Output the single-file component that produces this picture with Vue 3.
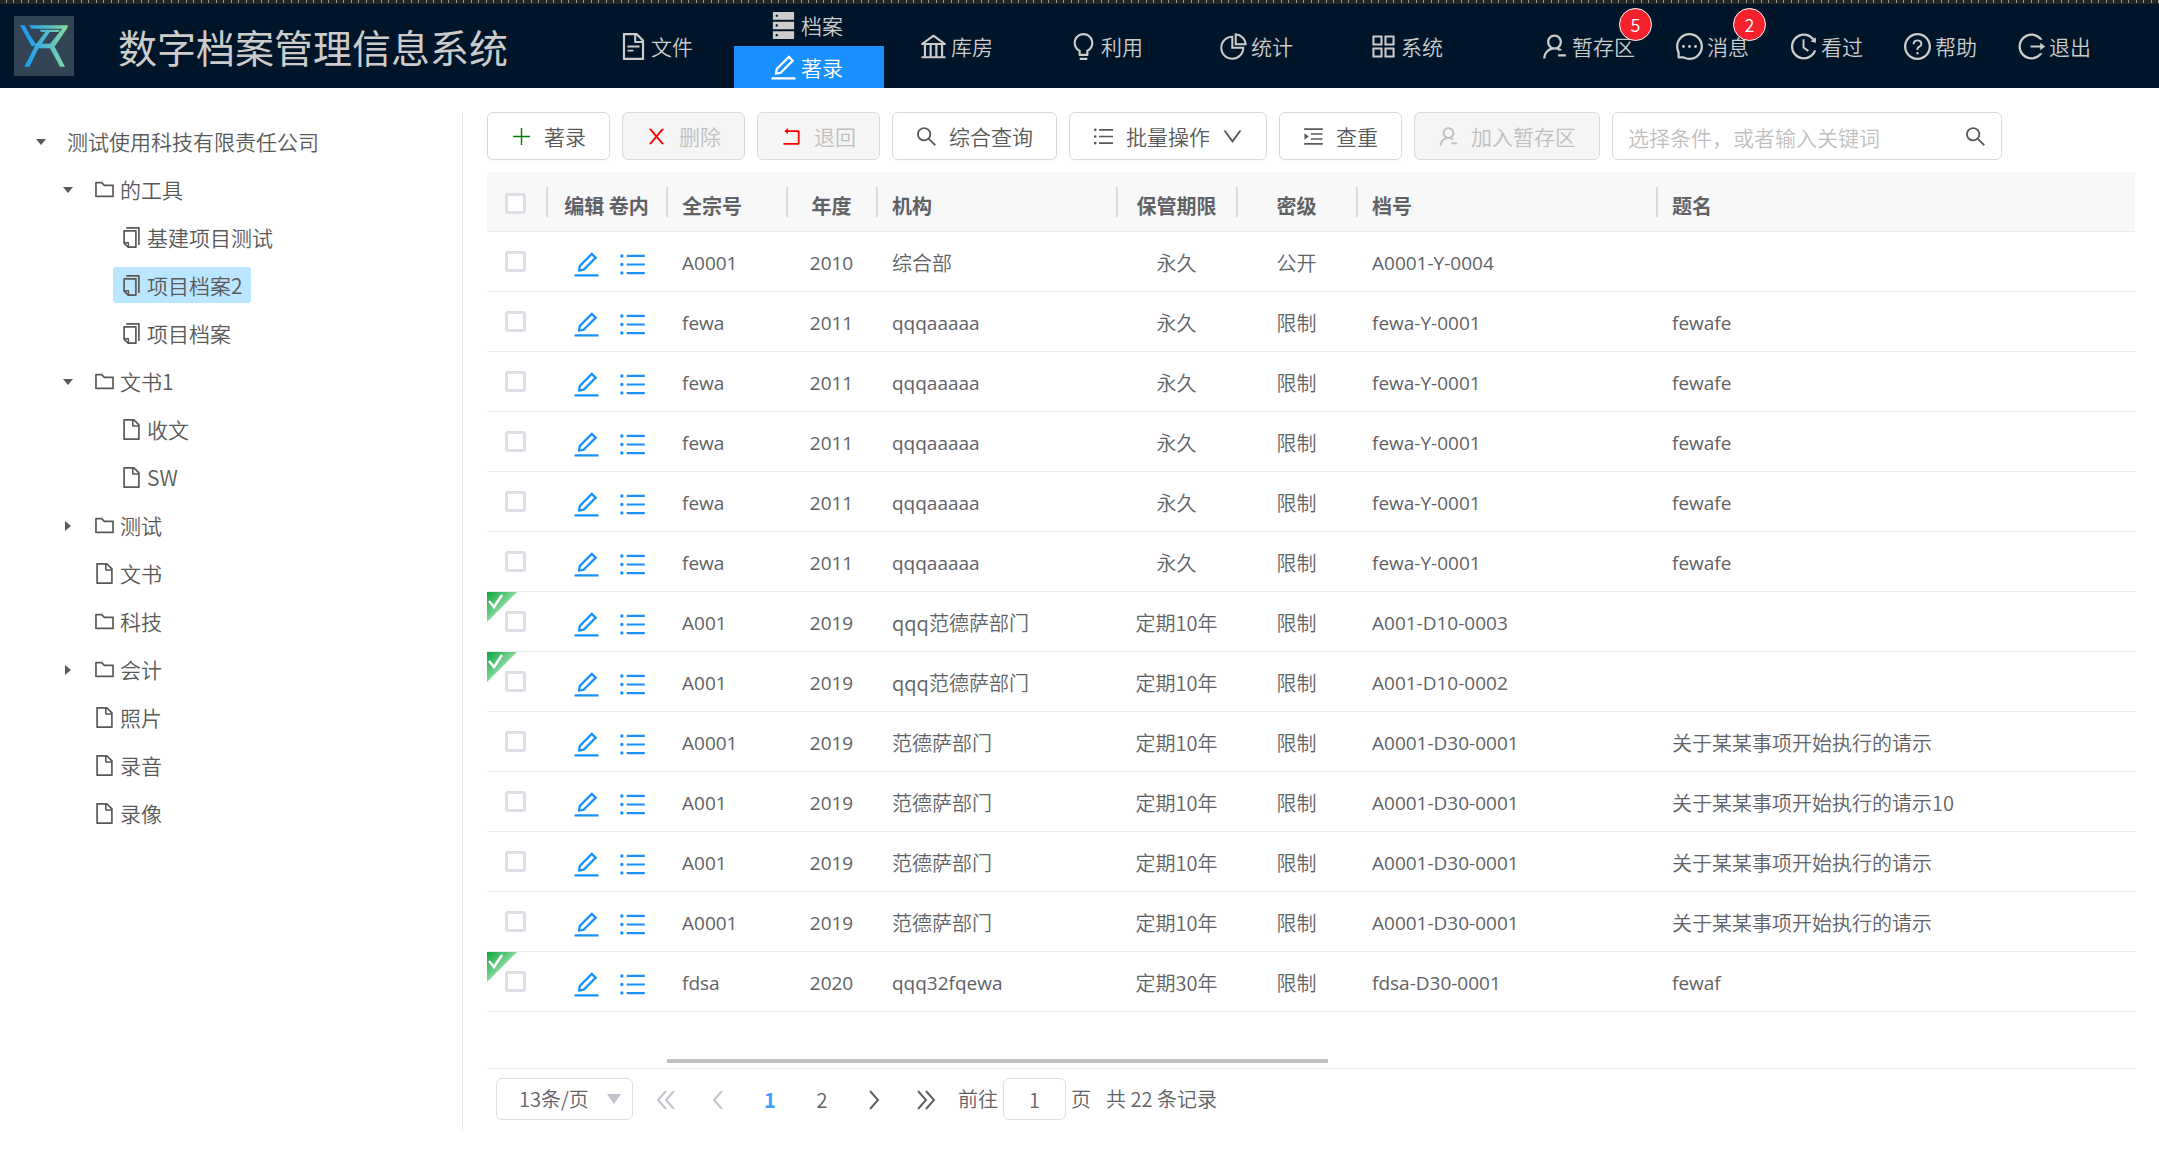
<script setup>
import { ref, h } from 'vue'

const filePath = 'M854.6 288.6L639.4 73.4c-6-6-14.1-9.4-22.6-9.4H192c-17.7 0-32 14.3-32 32v832c0 17.7 14.3 32 32 32h640c17.7 0 32-14.3 32-32V311.3c0-8.5-3.4-16.7-9.4-22.7zM790.2 326H602V137.8L790.2 326zm1.8 562H232V136h302v216a42 42 0 0 0 42 42h216v494z'

const paths = {
  file: filePath,
  fileText: filePath + 'M504 618H320c-4.4 0-8 3.6-8 8v48c0 4.4 3.6 8 8 8h184c4.4 0 8-3.6 8-8v-48c0-4.4-3.6-8-8-8zM312 490v48c0 4.4 3.6 8 8 8h384c4.4 0 8-3.6 8-8v-48c0-4.4-3.6-8-8-8H320c-4.4 0-8 3.6-8 8z',
  database: 'M832 64H192c-17.7 0-32 14.3-32 32v224h704V96c0-17.7-14.3-32-32-32zM288 232c-22.1 0-40-17.9-40-40s17.9-40 40-40 40 17.9 40 40-17.9 40-40 40zM160 928c0 17.7 14.3 32 32 32h640c17.7 0 32-14.3 32-32V704H160v224zm128-136c22.1 0 40 17.9 40 40s-17.9 40-40 40-40-17.9-40-40 17.9-40 40-40zM160 640h704V384H160v256zm128-168c22.1 0 40 17.9 40 40s-17.9 40-40 40-40-17.9-40-40 17.9-40 40-40z',
  edit: 'M257.7 752c2 0 4-.2 6-.5L431.9 722c2-.4 3.9-1.3 5.3-2.8l423.9-423.9a9.96 9.96 0 0 0 0-14.1L694.9 114.9c-1.9-1.9-4.4-2.9-7.1-2.9s-5.2 1-7.1 2.9L256.8 538.8c-1.5 1.5-2.4 3.3-2.8 5.3l-29.5 168.2a33.5 33.5 0 0 0 9.4 29.8c6.6 6.4 14.9 9.9 23.8 9.9zm67.4-174.4L687.8 215l73.3 73.3-362.7 362.6-88.9 15.7 15.6-89zM880 836H144c-17.7 0-32 14.3-32 32v36c0 4.4 3.6 8 8 8h784c4.4 0 8-3.6 8-8v-36c0-17.7-14.3-32-32-32z',
  bank: 'M894 462c30.9 0 43.8-39.7 18.7-58L530.8 126.2a31.81 31.81 0 0 0-37.6 0L111.3 404c-25.1 18.2-12.2 58 18.8 58H192v374h-72c-4.4 0-8 3.6-8 8v52c0 4.4 3.6 8 8 8h784c4.4 0 8-3.6 8-8v-52c0-4.4-3.6-8-8-8h-72V462h62zM512 196.7l271.1 197.2H240.9L512 196.7zM264 462h117v374H264V462zm189 0h117v374H453V462zm307 374H642V462h118v374z',
  bulb: 'M632 888H392c-4.4 0-8 3.6-8 8v32c0 17.7 14.3 32 32 32h192c17.7 0 32-14.3 32-32v-32c0-4.4-3.6-8-8-8zM512 64c-181.1 0-328 146.9-328 328 0 121.4 66 227.4 164 284.1V792c0 17.7 14.3 32 32 32h264c17.7 0 32-14.3 32-32V676.1c98-56.7 164-162.7 164-284.1 0-181.1-146.9-328-328-328zm127.9 549.8L604 634.6V752H420V634.6l-35.9-20.8C305.4 568.3 256 484.5 256 392c0-141.4 114.6-256 256-256s256 114.6 256 256c0 92.5-49.4 176.3-128.1 221.8z',
  pie: 'M864 518H506V160c0-4.4-3.6-8-8-8h-26a398.46 398.46 0 0 0-282.8 117.1 398.19 398.19 0 0 0-85.7 127.1A397.61 397.61 0 0 0 72 552a398.46 398.46 0 0 0 117.1 282.8c36.7 36.7 79.5 65.6 127.1 85.7A397.61 397.61 0 0 0 472 952a398.46 398.46 0 0 0 282.8-117.1c36.7-36.7 65.6-79.5 85.7-127.1A397.61 397.61 0 0 0 872 552v-26c0-4.4-3.6-8-8-8zM705.7 787.8A331.59 331.59 0 0 1 470.4 884c-88.1-.4-170.9-34.9-233.2-97.2C174.5 724.1 140 640.7 140 552c0-88.7 34.5-172.1 97.2-234.8 54.6-54.6 124.9-87.9 200.8-95.5V586h364.3c-7.7 76.3-41.3 147-96.6 201.8zM952 462.4l-2.6-28.2c-8.5-92.1-49.4-179-115.2-244.6A399.4 399.4 0 0 0 589 74.6L560.7 72c-4.7-.4-8.7 3.2-8.7 7.9V464c0 4.4 3.6 8 8 8l384-1c4.7 0 8.4-4 8-8.6zm-332.2-58.2V147.6a332.24 332.24 0 0 1 166.4 89.8c45.7 45.6 77 103.6 90 166.1l-256.4.7z',
  appstore: 'M464 144H160c-8.8 0-16 7.2-16 16v304c0 8.8 7.2 16 16 16h304c8.8 0 16-7.2 16-16V160c0-8.8-7.2-16-16-16zm-52 268H212V212h200v200zm452-268H560c-8.8 0-16 7.2-16 16v304c0 8.8 7.2 16 16 16h304c8.8 0 16-7.2 16-16V160c0-8.8-7.2-16-16-16zm-52 268H612V212h200v200zM464 544H160c-8.8 0-16 7.2-16 16v304c0 8.8 7.2 16 16 16h304c8.8 0 16-7.2 16-16V560c0-8.8-7.2-16-16-16zm-52 268H212V612h200v200zm452-268H560c-8.8 0-16 7.2-16 16v304c0 8.8 7.2 16 16 16h304c8.8 0 16-7.2 16-16V560c0-8.8-7.2-16-16-16zm-52 268H612V612h200v200z',
  user: 'M678.3 655.4c24.2-13 51.9-20.4 81.4-20.4h.1c3 0 4.4-3.6 2.2-5.6a371.67 371.67 0 0 0-103.7-65.8c-.4-.2-.8-.3-1.2-.5C719.2 518 759.6 444.7 759.6 362c0-137-110.8-248-247.5-248S264.7 225 264.7 362c0 82.7 40.4 156 102.6 201.1-.4.2-.8.3-1.2.5-44.7 18.9-84.8 46-119.3 80.6a373.42 373.42 0 0 0-80.4 119.5A373.6 373.6 0 0 0 137 901.8a8 8 0 0 0 8 8.2h59.9c4.3 0 7.9-3.5 8-7.8 2-77.2 32.9-149.5 87.6-204.3C357 641.2 432.2 610 512.2 610c56.7 0 111.1 15.7 158 45.1a8.1 8.1 0 0 0 8.1.3zM512.2 534c-45.8 0-88.9-17.9-121.4-50.4A171.2 171.2 0 0 1 340.5 362c0-45.9 17.9-89.1 50.3-121.6S466.3 190 512.2 190s88.9 17.9 121.4 50.4A171.2 171.2 0 0 1 683.9 362c0 45.9-17.9 89.1-50.3 121.6C601.1 516.1 558 534 512.2 534zM880 772H640c-4.4 0-8 3.6-8 8v56c0 4.4 3.6 8 8 8h240c4.4 0 8-3.6 8-8v-56c0-4.4-3.6-8-8-8z',
  message: 'M464 512a48 48 0 1 0 96 0 48 48 0 1 0-96 0zm200 0a48 48 0 1 0 96 0 48 48 0 1 0-96 0zm-400 0a48 48 0 1 0 96 0 48 48 0 1 0-96 0zm661.2-173.6c-22.6-53.7-55-101.9-96.3-143.3a444.35 444.35 0 0 0-143.3-96.3C630.6 75.7 572.2 64 512 64h-2c-60.6.3-119.3 12.3-174.5 35.9a445.35 445.35 0 0 0-142 96.5c-40.9 41.3-73 89.3-95.2 142.8-23 55.4-34.6 114.3-34.3 174.9A449.4 449.4 0 0 0 112 714v152a46 46 0 0 0 46 46h152.1A449.4 449.4 0 0 0 510 960h2.1c59.9 0 118-11.6 172.7-34.3a444.48 444.48 0 0 0 142.8-95.2c41.3-40.9 73.8-88.7 96.5-142 23.6-55.2 35.6-113.9 35.9-174.5.3-60.9-11.5-120-34.8-175.6zm-151.1 438C704 845.8 611 884 512 884h-1.7c-60.3-.3-120.2-15.3-173.1-43.5l-8.4-4.5H188V695.2l-4.5-8.4C155.3 633.9 140.3 574 140 513.7c-.4-99.7 37.7-193.3 107.6-263.8 69.8-70.5 163.1-109.5 262.8-109.9h1.7c50 0 98.5 9.7 144.2 28.9 44.6 18.7 84.6 45.6 119 80 34.3 34.3 61.3 74.4 80 119 19.4 46.2 29.1 95.2 28.9 145.8-.6 99.6-39.7 192.9-110.1 262.7z',
  history: 'M536.1 273H488c-4.4 0-8 3.6-8 8v275.3c0 2.6 1.2 5 3.3 6.5l165.3 120.7c3.6 2.6 8.6 1.9 11.2-1.7l28.6-39c2.7-3.7 1.9-8.7-1.7-11.2L544.1 528.5V281c0-4.4-3.6-8-8-8zm219.8 75.2l156.8 38.3c5 1.2 9.9-2.6 9.9-7.7l.8-161.5c0-6.7-7.7-10.5-12.9-6.3L752.9 334.1a8 8 0 0 0 3 14.1zm167.7 301.1l-56.7-19.5a8 8 0 0 0-10.1 4.8c-1.9 5.1-3.9 10.1-6 15.1-17.8 42.1-43.3 80-75.9 112.5a353 353 0 0 1-112.5 75.9 352.18 352.18 0 0 1-137.7 27.8c-47.8 0-94.1-9.3-137.7-27.8a353 353 0 0 1-112.5-75.9c-32.5-32.5-58-70.4-75.9-112.5A353.44 353.44 0 0 1 171 512c0-47.8 9.3-94.2 27.8-137.8 17.8-42.1 43.3-80 75.9-112.5a353 353 0 0 1 112.5-75.9C430.6 167.3 477 158 524.8 158s94.1 9.3 137.7 27.8A353 353 0 0 1 775 261.7c10.2 10.3 19.8 21 28.6 32.3l59.8-46.8C784.7 146.6 662.2 81.9 524.6 82 285 82.1 92.6 276.7 95 516.4 97.4 751.9 288.9 942 524.8 942c185.5 0 343.5-117.6 403.7-282.3 1.5-4.2-.7-8.9-4.9-10.4z',
  help: 'M512 64C264.6 64 64 264.6 64 512s200.6 448 448 448 448-200.6 448-448S759.4 64 512 64zm0 820c-205.4 0-372-166.6-372-372s166.6-372 372-372 372 166.6 372 372-166.6 372-372 372zM623.6 316.7C593.6 290.4 554 276 512 276s-81.6 14.5-111.6 40.7C369.2 344 352 380.7 352 420v7.6c0 4.4 3.6 8 8 8h48c4.4 0 8-3.6 8-8V420c0-44.1 43.1-80 96-80s96 35.9 96 80c0 31.1-22 59.6-56.1 72.7-21.2 8.1-39.2 22.3-52.1 40.9-13.1 19-19.9 41.8-19.9 64.9V620c0 4.4 3.6 8 8 8h48c4.4 0 8-3.6 8-8v-22.7a48.3 48.3 0 0 1 30.9-44.8c59-22.7 97.1-74.7 97.1-132.5.1-39.3-17.1-76-48.3-103.3zM472 732a40 40 0 1 0 80 0 40 40 0 1 0-80 0z',
  logout: 'M868 732h-70.3c-4.8 0-9.3 2.1-12.3 5.8-7 8.5-14.5 16.7-22.4 24.5a353.84 353.84 0 0 1-112.7 75.9A352.8 352.8 0 0 1 512.4 866c-47.9 0-94.3-9.4-137.9-27.8a353.84 353.84 0 0 1-112.7-75.9 353.28 353.28 0 0 1-76-112.5C167.3 606.2 158 559.9 158 512s9.4-94.2 27.8-137.8c17.8-42.1 43.4-80 76-112.5s70.5-58.1 112.7-75.9c43.6-18.4 90-27.8 137.9-27.8 47.9 0 94.3 9.3 137.9 27.8 42.2 17.8 80.1 43.4 112.7 75.9 7.9 7.9 15.3 16.1 22.4 24.5 3 3.7 7.6 5.8 12.3 5.8H868c6.3 0 10.2-7 6.7-12.3C798 160.5 663.8 81.6 511.3 82 271.7 82.6 79.6 277.1 82 516.4 84.4 751.9 276.2 942 512.4 942c152.1 0 285.7-78.8 362.3-197.7 3.4-5.3-.4-12.3-6.7-12.3zm88.9-226.3L815 393.7c-5.3-4.2-13-.4-13 6.3v76H488c-4.4 0-8 3.6-8 8v56c0 4.4 3.6 8 8 8h314v76c0 6.7 7.8 10.5 13 6.3l141.9-112a8 8 0 0 0 0-12.6z',
  folder: 'M880 298.4H521L403.7 186.2a8.15 8.15 0 0 0-5.5-2.2H144c-17.7 0-32 14.3-32 32v592c0 17.7 14.3 32 32 32h736c17.7 0 32-14.3 32-32V330.4c0-17.7-14.3-32-32-32zM840 768H184V256h188.5l119.6 114.4H840V768z',
  copy: 'M832 64H296c-4.4 0-8 3.6-8 8v56c0 4.4 3.6 8 8 8h496v688c0 4.4 3.6 8 8 8h56c4.4 0 8-3.6 8-8V96c0-17.7-14.3-32-32-32zM704 192H192c-17.7 0-32 14.3-32 32v530.7c0 8.5 3.4 16.6 9.4 22.6l173.3 173.3c2.2 2.2 4.7 4 7.4 5.5v1.9h4.2c3.5 1.3 7.2 2 11 2H704c17.7 0 32-14.3 32-32V224c0-17.7-14.3-32-32-32zM350 856.2L263.9 770H350v86.2zM664 888H414V746c0-22.1-17.9-40-40-40H232V264h432v624z',
  plus: 'M482 152h60v720h-60zM152 482h720v60H152z',
  close: 'M563.8 512l262.5-312.9c4.4-5.2.7-13.1-6.1-13.1h-79.8c-4.7 0-9.2 2.1-12.3 5.7L511.6 449.8 295.1 191.7c-3-3.6-7.5-5.7-12.3-5.7H203c-6.8 0-10.5 7.9-6.1 13.1L459.4 512 196.9 824.9A7.95 7.95 0 0 0 203 838h79.8c4.7 0 9.2-2.1 12.3-5.7l216.5-258.1 216.5 258.1c3 3.6 7.5 5.7 12.3 5.7h79.8c6.8 0 10.5-7.9 6.1-13.1L563.8 512z',
  rollback: 'M793 242H366v-74c0-6.7-7.7-10.4-12.9-6.3l-142 112a8 8 0 0 0 0 12.6l142 112c5.2 4.1 12.9.4 12.9-6.3v-74h415v470H175c-4.4 0-8 3.6-8 8v60c0 4.4 3.6 8 8 8h618c35.3 0 64-28.7 64-64V306c0-35.3-28.7-64-64-64z',
  search: 'M909.6 854.5L649.9 594.8C690.2 542.7 712 479 712 412c0-80.2-31.3-155.4-87.9-212.1-56.6-56.7-132-87.9-212.1-87.9s-155.5 31.3-212.1 87.9C143.2 256.5 112 331.8 112 412c0 80.1 31.3 155.5 87.9 212.1C256.5 680.8 331.8 712 412 712c67 0 130.6-21.8 182.7-62l259.7 259.6a8.2 8.2 0 0 0 11.6 0l43.6-43.5a8.2 8.2 0 0 0 0-11.6zM570.4 570.4C528 612.7 471.8 636 412 636s-116-23.3-158.4-65.6C211.3 528 188 471.8 188 412s23.3-116.1 65.6-158.4C296 211.3 352.2 188 412 188s116.1 23.2 158.4 65.6S636 352.2 636 412s-23.3 116.1-65.6 158.4z',
  list: 'M912 192H328c-4.4 0-8 3.6-8 8v56c0 4.4 3.6 8 8 8h584c4.4 0 8-3.6 8-8v-56c0-4.4-3.6-8-8-8zm0 284H328c-4.4 0-8 3.6-8 8v56c0 4.4 3.6 8 8 8h584c4.4 0 8-3.6 8-8v-56c0-4.4-3.6-8-8-8zm0 284H328c-4.4 0-8 3.6-8 8v56c0 4.4 3.6 8 8 8h584c4.4 0 8-3.6 8-8v-56c0-4.4-3.6-8-8-8zM104 228a56 56 0 1 0 112 0 56 56 0 1 0-112 0zm0 284a56 56 0 1 0 112 0 56 56 0 1 0-112 0zm0 284a56 56 0 1 0 112 0 56 56 0 1 0-112 0z',
  unfold: 'M408 442h480c4.4 0 8-3.6 8-8v-56c0-4.4-3.6-8-8-8H408c-4.4 0-8 3.6-8 8v56c0 4.4 3.6 8 8 8zm-8 204c0 4.4 3.6 8 8 8h480c4.4 0 8-3.6 8-8v-56c0-4.4-3.6-8-8-8H408c-4.4 0-8 3.6-8 8v56zm504-486H120c-4.4 0-8 3.6-8 8v56c0 4.4 3.6 8 8 8h784c4.4 0 8-3.6 8-8v-56c0-4.4-3.6-8-8-8zm0 632H120c-4.4 0-8 3.6-8 8v56c0 4.4 3.6 8 8 8h784c4.4 0 8-3.6 8-8v-56c0-4.4-3.6-8-8-8zM142.4 642.1L298.7 519a8.84 8.84 0 0 0 0-13.9L142.4 381.9c-5.8-4.6-14.4-.5-14.4 6.9v246.3a8.9 8.9 0 0 0 14.4 7z',
  down: 'M884 256h-75c-5.1 0-9.9 2.5-12.9 6.6L512 654.2 227.9 262.6c-3-4.1-7.8-6.6-12.9-6.6h-75c-6.5 0-10.3 7.4-6.5 12.7l352.6 486.1c12.8 17.6 39 17.6 51.7 0l352.6-486.1c3.9-5.3.1-12.7-6.4-12.7z'
}

const Icon = (props) =>
  h('svg', { viewBox: '64 64 896 896', fill: 'currentColor', 'aria-hidden': 'true' }, [h('path', { d: paths[props.name] })])
Icon.props = ['name']

const navBefore = [{ icon: 'fileText', text: '文件' }]
const navAfter = [
  { icon: 'bank', text: '库房' },
  { icon: 'bulb', text: '利用' },
  { icon: 'pie', text: '统计' },
  { icon: 'appstore', text: '系统' }
]
const userNav = [
  { icon: 'user', text: '暂存区', badge: 5 },
  { icon: 'message', text: '消息', badge: 2 },
  { icon: 'history', text: '看过' },
  { icon: 'help', text: '帮助' },
  { icon: 'logout', text: '退出' }
]

const tree = [
  { level: 0, caret: 'open', text: '测试使用科技有限责任公司' },
  { level: 1, caret: 'open', icon: 'folder', text: '的工具' },
  { level: 2, icon: 'copy', text: '基建项目测试' },
  { level: 2, icon: 'copy', text: '项目档案2', selected: true },
  { level: 2, icon: 'copy', text: '项目档案' },
  { level: 1, caret: 'open', icon: 'folder', text: '文书1' },
  { level: 2, icon: 'file', text: '收文' },
  { level: 2, icon: 'file', text: 'SW' },
  { level: 1, caret: 'closed', icon: 'folder', text: '测试' },
  { level: 1, icon: 'file', text: '文书' },
  { level: 1, icon: 'folder', text: '科技' },
  { level: 1, caret: 'closed', icon: 'folder', text: '会计' },
  { level: 1, icon: 'file', text: '照片' },
  { level: 1, icon: 'file', text: '录音' },
  { level: 1, icon: 'file', text: '录像' }
]

const tools = [
  { icon: 'plus', text: '著录', tone: 'green' },
  { icon: 'close', text: '删除', tone: 'red', disabled: true },
  { icon: 'rollback', text: '退回', tone: 'red', disabled: true },
  { icon: 'search', text: '综合查询' },
  { icon: 'list', text: '批量操作', menu: true },
  { icon: 'unfold', text: '查重' },
  { icon: 'user', text: '加入暂存区', disabled: true }
]

const fewa = ['fewa', '2011', 'qqqaaaaa', '永久', '限制', 'fewa-Y-0001', 'fewafe']
const title = '关于某某事项开始执行的请示'
const rows = [
  { cells: ['A0001', '2010', '综合部', '永久', '公开', 'A0001-Y-0004', ''] },
  { cells: fewa },
  { cells: fewa },
  { cells: fewa },
  { cells: fewa },
  { cells: fewa },
  { done: true, cells: ['A001', '2019', 'qqq范德萨部门', '定期10年', '限制', 'A001-D10-0003', ''] },
  { done: true, cells: ['A001', '2019', 'qqq范德萨部门', '定期10年', '限制', 'A001-D10-0002', ''] },
  { cells: ['A0001', '2019', '范德萨部门', '定期10年', '限制', 'A0001-D30-0001', title] },
  { cells: ['A001', '2019', '范德萨部门', '定期10年', '限制', 'A0001-D30-0001', title + '10'] },
  { cells: ['A001', '2019', '范德萨部门', '定期10年', '限制', 'A0001-D30-0001', title] },
  { cells: ['A0001', '2019', '范德萨部门', '定期10年', '限制', 'A0001-D30-0001', title] },
  { done: true, cells: ['fdsa', '2020', 'qqq32fqewa', '定期30年', '限制', 'fdsa-D30-0001', 'fewaf'] }
]
const centered = [1, 3, 4]
const isLatin = (text) => /^[\x20-\x7e]+$/.test(text)

const keyword = ref('')
const page = ref('1')
</script>

<template>
  <div class="app">
    <header class="header">
      <div class="ruler"></div>
      <div class="bar">
        <div class="logo">
          <svg viewBox="0 0 180 180" aria-hidden="true">
            <defs>
              <linearGradient id="logo-tone" gradientUnits="userSpaceOnUse" x1="20" y1="0" x2="160" y2="0">
                <stop offset="0" stop-color="#1a9bf4" />
                <stop offset="0.2" stop-color="#25a2ee" />
                <stop offset="1" stop-color="#86dba0" />
              </linearGradient>
            </defs>
            <g fill="url(#logo-tone)">
              <path d="M18 28H32L48 58L68 88H60L54 92Z" />
              <path d="M45 28H163L158 38H52Z" />
              <path d="M76 41H138L134 48H82Z" />
              <path d="M97 44H110L80 88L74 96L46 152H31L58 100L66 85Z" />
              <path d="M146 36H160L122 92L153 152H138L108 97L106 86Z" />
              <path d="M62 83H118V97H62Z" />
            </g>
          </svg>
        </div>
        <h1 class="title">数字档案管理信息系统</h1>
        <nav class="nav">
          <a v-for="n in navBefore" :key="n.text" href="#" class="nav-item"><Icon :name="n.icon" /><span>{{ n.text }}</span></a>
          <div class="nav-group">
            <a href="#" class="nav-item"><Icon name="database" /><span>档案</span></a>
            <a href="#" class="nav-item active"><Icon name="edit" /><span>著录</span></a>
          </div>
          <a v-for="n in navAfter" :key="n.text" href="#" class="nav-item"><Icon :name="n.icon" /><span>{{ n.text }}</span></a>
        </nav>
        <nav class="user-nav">
          <a v-for="n in userNav" :key="n.text" href="#" class="user-item">
            <Icon :name="n.icon" /><span>{{ n.text }}</span>
            <span v-if="n.badge" class="badge">{{ n.badge }}</span>
          </a>
        </nav>
      </div>
    </header>

    <div class="body">
      <aside class="sidebar">
        <ul class="tree">
          <li v-for="(n, i) in tree" :key="i" class="node" :class="'level-' + n.level">
            <span class="caret">
              <svg v-if="n.caret" viewBox="0 0 12 12" :class="n.caret" aria-hidden="true"><path d="M1 3H11L6 9Z" fill="currentColor" /></svg>
            </span>
            <button type="button" class="node-title" :class="{ selected: n.selected }">
              <Icon v-if="n.icon" :name="n.icon" /><span>{{ n.text }}</span>
            </button>
          </li>
        </ul>
      </aside>

      <main class="main">
        <div class="toolbar">
          <button v-for="t in tools" :key="t.text" type="button" class="tool" :class="t.tone" :disabled="t.disabled">
            <Icon :name="t.icon" /><span>{{ t.text }}</span><Icon v-if="t.menu" name="down" />
          </button>
          <div class="search">
            <input v-model="keyword" type="text" aria-label="关键词" placeholder="选择条件，或者输入关键词" />
            <button type="button" aria-label="搜索"><Icon name="search" /></button>
          </div>
        </div>

        <table class="grid">
          <colgroup>
            <col class="w61" /><col class="w120" /><col class="w120" /><col class="w90" /><col class="w240" />
            <col class="w120" /><col class="w120" /><col class="w300" /><col />
          </colgroup>
          <thead>
            <tr>
              <th class="check"><input type="checkbox" aria-label="全选" /></th>
              <th class="center">编辑 卷内</th>
              <th>全宗号</th>
              <th class="center">年度</th>
              <th>机构</th>
              <th class="center">保管期限</th>
              <th class="center">密级</th>
              <th>档号</th>
              <th>题名</th>
            </tr>
          </thead>
          <tbody>
            <tr v-for="(r, i) in rows" :key="i">
              <td class="check">
                <svg v-if="r.done" class="done" viewBox="0 0 30 30" aria-hidden="true">
                  <defs>
                    <linearGradient id="done-tone" x1="0" y1="0" x2="0.55" y2="0.55">
                      <stop offset="0" stop-color="#08a63a" />
                      <stop offset="1" stop-color="#8edca6" />
                    </linearGradient>
                  </defs>
                  <path d="M0 0H30L0 30Z" fill="url(#done-tone)" />
                  <path d="M2 9L7 15L15 3" fill="none" stroke="#fff" stroke-width="2.6" />
                </svg>
                <input type="checkbox" :aria-label="'选择第' + (i + 1) + '行'" />
              </td>
              <td class="actions">
                <div>
                  <button type="button" aria-label="编辑"><Icon name="edit" /></button>
                  <button type="button" aria-label="卷内"><Icon name="list" /></button>
                </div>
              </td>
              <td v-for="(c, j) in r.cells" :key="j" :class="{ center: centered.includes(j), latin: isLatin(c) }">{{ c }}</td>
            </tr>
          </tbody>
        </table>
        <div class="scroll-track"><div class="scroll-thumb"></div></div>

        <div class="pager">
          <div class="size">
            <select aria-label="每页条数"><option>13条/页</option></select>
            <svg viewBox="0 0 14 10" aria-hidden="true"><path d="M0 0H14L7 10Z" fill="currentColor" /></svg>
          </div>
          <div class="pages">
            <button type="button" disabled aria-label="首页"><svg viewBox="0 0 20 20"><path d="M10 1L2 10L10 19M18 1L10 10L18 19" /></svg></button>
            <button type="button" disabled aria-label="上一页"><svg viewBox="0 0 20 20"><path d="M14 1L6 10L14 19" /></svg></button>
            <button type="button" class="current">1</button>
            <button type="button">2</button>
            <button type="button" aria-label="下一页"><svg viewBox="0 0 20 20"><path d="M6 1L14 10L6 19" /></svg></button>
            <button type="button" aria-label="末页"><svg viewBox="0 0 20 20"><path d="M2 1L10 10L2 19M10 1L18 10L10 19" /></svg></button>
          </div>
          <label class="jump"><span>前往</span><input v-model="page" type="text" /><span>页</span></label>
          <span class="total">共 22 条记录</span>
        </div>
      </main>
    </div>
  </div>
</template>

<style>
body {
  margin: 0;
  background: #fff;
}
</style>

<style scoped>
.app {
  font-family: "Noto Sans CJK SC", sans-serif;
  font-size: 20px;
  line-height: 28px;
  font-weight: 350;
  color: #595959;
}
.app * {
  box-sizing: border-box;
}
button,
input,
select {
  margin: 0;
  font: inherit;
  color: inherit;
}
button {
  padding: 0;
  border: 0;
  background: none;
}
svg {
  display: block;
  flex: none;
}
a {
  color: inherit;
  text-decoration: none;
}

/* header */
.header {
  background: #001529;
  color: #ccc;
}
.ruler {
  height: 4px;
  background:
    linear-gradient(#262626, #262626) 0 3px / 100% 1px no-repeat,
    repeating-linear-gradient(90deg, #262626 0 6px, #999 6px 7px, #262626 7px 13px, #999 13px 14px, #262626 14px 15px);
}
.bar {
  display: flex;
  align-items: center;
  height: 84px;
  padding: 0 68px 0 14px;
}
.logo {
  width: 60px;
  height: 60px;
  background: #334454;
}
.title {
  width: 510px;
  margin: 0;
  padding-left: 44px;
  font-size: 39px;
  line-height: 60px;
  font-weight: 400;
  white-space: nowrap;
}
.logo,
.title,
.nav {
  flex: none;
}
.nav {
  display: flex;
  align-items: center;
  font-size: 21px;
}
.nav-item {
  display: flex;
  align-items: center;
  justify-content: center;
  gap: 4px;
  width: 150px;
  height: 42px;
  padding-right: 5px;
}
.nav-item svg,
.user-item svg {
  width: 27px;
  height: 27px;
}
.active {
  background: #1890ff;
  color: #fff;
}
.user-nav {
  display: flex;
  gap: 41px;
  margin-left: auto;
  font-size: 21px;
}
.user-item {
  position: relative;
  display: flex;
  align-items: center;
  gap: 4px;
}
.badge {
  position: absolute;
  top: -24px;
  right: -17px;
  width: 33px;
  height: 33px;
  border: 1px solid #fff;
  border-radius: 50%;
  background: #f5222d;
  color: #fff;
  font-size: 18px;
  line-height: 31px;
  text-align: center;
}

/* layout */
.body {
  display: flex;
  padding-top: 24px;
}
.sidebar {
  flex: none;
  width: 463px;
  padding: 11px 0 0 23px;
  border-right: 1px solid #e8e8e8;
}
.main {
  flex: 1;
  min-width: 0;
  padding: 0 24px 10px;
}

/* tree */
.tree {
  display: flex;
  flex-direction: column;
  gap: 12px;
  margin: 0;
  padding: 0;
  list-style: none;
  font-size: 21px;
}
.node {
  display: flex;
  height: 36px;
}
.level-1 {
  padding-left: 27px;
}
.level-2 {
  padding-left: 54px;
}
.caret {
  display: flex;
  align-items: center;
  justify-content: center;
  width: 36px;
  padding-top: 2px;
}
.caret svg {
  width: 12px;
  height: 12px;
}
.closed {
  transform: rotate(-90deg);
}
.node-title {
  display: flex;
  align-items: center;
  gap: 5px;
  padding: 0 8px;
  border-radius: 3px;
}
.node-title svg {
  width: 21px;
  height: 21px;
}
.selected {
  background: #bae7ff;
}

/* toolbar */
.toolbar {
  display: flex;
  gap: 12px;
  margin-bottom: 12px;
  font-size: 21px;
}
.tool {
  display: flex;
  align-items: center;
  gap: 12px;
  height: 48px;
  padding: 0 23px;
  border: 1px solid #d9d9d9;
  border-radius: 6px;
  background: #fff;
  box-shadow: 0 3px 0 rgba(0, 0, 0, 0.015);
  white-space: nowrap;
}
.tool svg,
.search svg {
  width: 21px;
  height: 21px;
}
.tool:disabled {
  background: #f5f5f5;
  box-shadow: none;
  color: #bfbfbf;
}
.green svg {
  color: #008000;
}
.red svg {
  color: #f00;
}
.search {
  display: flex;
  align-items: center;
  width: 390px;
  height: 48px;
  padding: 1px 15px 0;
  border: 1px solid #d9d9d9;
  border-radius: 6px;
}
.search input {
  flex: 1;
  min-width: 0;
  padding: 0;
  border: 0;
  outline: 0;
  background: none;
}
.search input::placeholder {
  color: #bfbfbf;
  opacity: 1;
}

/* records */
.grid {
  width: 100%;
  border-collapse: separate;
  border-spacing: 0;
  table-layout: fixed;
  color: #606266;
}
.w61 {
  width: 61px;
}
.w90 {
  width: 90px;
}
.w120 {
  width: 120px;
}
.w240 {
  width: 240px;
}
.w300 {
  width: 300px;
}
.grid th,
.grid td {
  height: 60px;
  padding: 2px 14px 0;
  border-bottom: 1px solid #e8eaec;
  text-align: left;
  white-space: nowrap;
}
.grid th {
  padding-top: 8px;
  background: linear-gradient(#d9dbde, #d9dbde) right center / 2px 30px no-repeat #f8f8f8;
  font-weight: 700;
}
.grid th:last-child {
  background-image: none;
}
.grid .center {
  padding-left: 0;
  padding-right: 3px;
  text-align: center;
}
.grid .latin {
  font-family: "Open Sans", sans-serif;
  font-size: 19px;
  font-weight: 400;
}
.grid input {
  appearance: none;
  display: block;
  width: 21px;
  height: 21px;
  margin: 0;
  border: 3px solid #dcdfe6;
  border-radius: 3px;
  background: #fff;
}
.grid .check {
  position: relative;
  padding: 0 0 0 18px;
}
.grid th.check {
  padding-top: 4px;
}
.done {
  position: absolute;
  top: 0;
  left: 0;
  width: 30px;
  height: 30px;
}
.grid .actions {
  padding: 0 0 0 25px;
}
.actions div {
  display: flex;
  gap: 19px;
  padding-top: 6px;
  color: #1890ff;
}
.actions svg {
  width: 27px;
  height: 27px;
}
.scroll-track {
  padding: 47px 0 5px 180px;
  border-bottom: 1px solid #e8eaec;
}
.scroll-thumb {
  width: 45%;
  height: 4px;
  background: #bfbfbf;
}

/* pager */
.pager {
  display: flex;
  align-items: center;
  padding: 9px 0 0 9px;
  color: #606266;
}
.size {
  position: relative;
}
.size select {
  appearance: none;
  display: block;
  width: 137px;
  height: 42px;
  padding: 0 0 0 22px;
  border: 1px solid #dcdfe6;
  border-radius: 6px;
  background: #fff;
}
.size svg {
  position: absolute;
  top: 16px;
  right: 12px;
  width: 14px;
  height: 10px;
  color: #c0c4cc;
}
.pages {
  display: flex;
  margin: 0 6px 0 7px;
}
.pages button {
  display: flex;
  align-items: center;
  justify-content: center;
  width: 52px;
  height: 42px;
  padding-top: 2px;
}
.pages svg {
  width: 20px;
  height: 20px;
  fill: none;
  stroke: currentColor;
  stroke-width: 2px;
}
.pages button:disabled {
  color: #c0c4cc;
}
.pages .current {
  color: #409eff;
  font-weight: 700;
}
.jump {
  display: flex;
  align-items: center;
  gap: 5px;
}
.jump input {
  width: 63px;
  height: 42px;
  padding: 0;
  border: 1px solid #dcdfe6;
  border-radius: 6px;
  text-align: center;
}
.total {
  margin-left: 15px;
}
</style>
